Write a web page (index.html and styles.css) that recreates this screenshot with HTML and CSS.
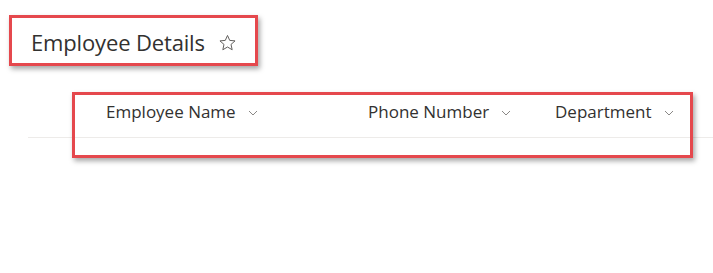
FILE: index.html
```html
<!DOCTYPE html>
<html lang="en">
<head>
<meta charset="utf-8">
<title>Employee Details</title>
<link rel="stylesheet" href="styles.css">
</head>
<body>
<div class="page">
  <div class="title-row">
    <h1 class="title">Employee Details</h1>
    <svg class="star" viewBox="0 0 20 20" width="19" height="18" aria-hidden="true">
      <path d="M10 1.6 L12.45 7.1 L18.4 7.65 L13.9 11.6 L15.2 17.5 L10 14.45 L4.8 17.5 L6.1 11.6 L1.6 7.65 L7.55 7.1 Z" fill="none" stroke="#605e5c" stroke-width="1.1" stroke-linejoin="round"/>
    </svg>
  </div>
  <div class="list">
    <div class="header">
      <div class="hcell name">Employee Name<svg class="chev" viewBox="0 0 10 6" width="10" height="6"><path d="M1 1 L5 5 L9 1" fill="none" stroke="#8a8886" stroke-width="1"/></svg></div>
      <div class="hcell phone">Phone Number<svg class="chev" viewBox="0 0 10 6" width="10" height="6"><path d="M1 1 L5 5 L9 1" fill="none" stroke="#8a8886" stroke-width="1"/></svg></div>
      <div class="hcell dept">Department<svg class="chev" viewBox="0 0 10 6" width="10" height="6"><path d="M1 1 L5 5 L9 1" fill="none" stroke="#8a8886" stroke-width="1"/></svg></div>
    </div>
  </div>
  <div class="annot annot-title"></div>
  <div class="annot annot-header"></div>
</div>
</body>
</html>
```
FILE: styles.css
```css
html, body {
  margin: 0;
  padding: 0;
  background: #ffffff;
}
body {
  font-family: "Open Sans", "Noto Sans", "Liberation Sans", sans-serif;
  color: #323130;
}
.page {
  position: relative;
  width: 713px;
  height: 273px;
  overflow: hidden;
}
.title-row {
  display: flex;
  align-items: center;
  padding: 27px 0 0 31px;
  height: 30px;
}
.title {
  margin: 0;
  font-size: 22px;
  font-weight: 400;
  line-height: 30px;
  letter-spacing: -0.15px;
}
.star {
  margin-left: 13px;
  margin-top: 1px;
}
.list {
  margin-top: 44px;
  margin-left: 28px;
}
.header {
  display: flex;
  border-bottom: 1px solid #edebe9;
  padding: 0 0 14px 78px;
}
.hcell {
  display: flex;
  align-items: center;
  font-size: 17px;
  line-height: 22px;
}
.name { width: 262px; }
.phone { width: 187px; }
.chev {
  margin-left: 12px;
  margin-top: 1px;
}
.annot {
  position: absolute;
  box-sizing: border-box;
  border: 3px solid #e5484d;
  box-shadow: 2px 3px 5px rgba(0, 0, 0, 0.35);
}
.annot-title {
  left: 9px;
  top: 15px;
  width: 249px;
  height: 51px;
}
.annot-header {
  left: 72px;
  top: 92px;
  width: 621px;
  height: 66px;
}
```
